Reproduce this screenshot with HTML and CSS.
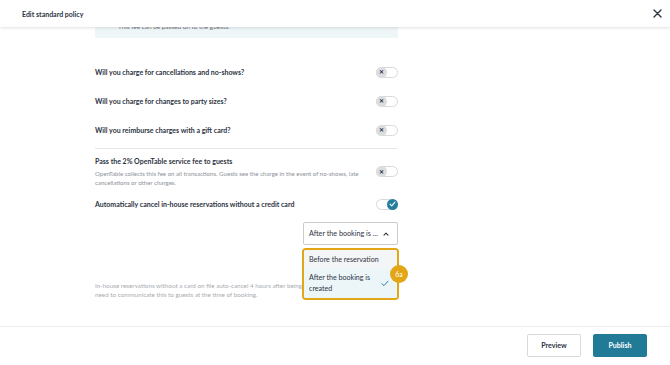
FILE: index.html
```html
<!DOCTYPE html>
<html lang="en">
<head>
    <meta charset="UTF-8">
    <title>Edit standard policy</title>
    <link rel="stylesheet" href="styles.css">
</head>
<body>
    <!-- Header -->
    <div class="header">
        <span class="header-title">Edit standard policy</span>
        <svg class="close" width="9" height="9" viewBox="0 0 9 9">
            <path d="M1 1 L8 8 M8 1 L1 8" stroke="#2d333f" stroke-width="1.4" stroke-linecap="round"/>
        </svg>
    </div>

    <!-- Scrolled policy content -->
    <div class="main">
        <div class="column">
            <div class="fee-note">This fee can be passed on to the guests.</div>

            <div class="row row-first">
                <span class="question">Will you charge for cancellations and no-shows?</span>
                <span class="toggle"><span class="knob">&#x2715;</span></span>
            </div>
            <div class="row">
                <span class="question">Will you charge for changes to party sizes?</span>
                <span class="toggle"><span class="knob">&#x2715;</span></span>
            </div>
            <div class="row">
                <span class="question">Will you reimburse charges with a gift card?</span>
                <span class="toggle"><span class="knob">&#x2715;</span></span>
            </div>

            <div class="divider"></div>

            <div class="row row-desc">
                <div>
                    <div class="question">Pass the 2% OpenTable service fee to guests</div>
                    <div class="desc">OpenTable collects this fee on all transactions. Guests see the charge in the event of no-shows, late cancellations or other charges.</div>
                </div>
                <span class="toggle"><span class="knob">&#x2715;</span></span>
            </div>

            <div class="row row-auto">
                <span class="question">Automatically cancel in-house reservations without a credit card</span>
                <span class="toggle on">
                    <span class="knob">
                        <svg width="7" height="6" viewBox="0 0 7 6"><path d="M1 3.2 L2.7 4.8 L6 1.2" fill="none" stroke="#fff" stroke-width="1.1" stroke-linecap="round" stroke-linejoin="round"/></svg>
                    </span>
                </span>
            </div>

            <div class="select-wrap">
                <div class="select">
                    <span>After the booking is ...</span>
                    <svg width="6" height="4" viewBox="0 0 6 4"><path d="M1 3.2 L3 1.2 L5 3.2" fill="none" stroke="#2d333f" stroke-width="1.1" stroke-linecap="round" stroke-linejoin="round"/></svg>
                </div>
                <div class="menu">
                    <div class="menu-item">Before the reservation</div>
                    <div class="menu-item selected">
                        <span>After the booking is<br>created</span>
                        <svg width="8" height="7" viewBox="0 0 8 7"><path d="M1 3.8 L3 5.6 L7 1.2" fill="none" stroke="#247f9e" stroke-width="1" stroke-linecap="round" stroke-linejoin="round"/></svg>
                    </div>
                    <span class="badge">6a</span>
                </div>
            </div>

            <div class="auto-note">In-house reservations without a card on file auto-cancel 4 hours after being created. You'll<br>need to communicate this to guests at the time of booking.</div>
        </div>
    </div>

    <!-- Footer -->
    <div class="footer">
        <button class="btn btn-secondary">Preview</button>
        <button class="btn btn-primary">Publish</button>
    </div>
</body>
</html>
```

FILE: styles.css
```css
/* General Styles */

body {
    margin: 0;
    width: 670px;
    height: 365px;
    overflow: hidden;
    background: #fff;
    font-family: "Lato", "Open Sans", sans-serif;
    color: #2d333f;
}

.header {
    position: relative;
    z-index: 2;
    height: 27px;
    display: flex;
    align-items: center;
    justify-content: space-between;
    padding: 0 8px 0 22px;
    background: #fff;
    box-shadow: 0 1px 3px rgba(0, 0, 0, 0.12);
}

.header-title {
    font-size: 7px;
    font-weight: 700;
}

.main {
    height: 299px;
    overflow: hidden;
}

.column {
    margin-left: 95px;
    width: 303px;
}

.fee-note {
    margin-top: -5px;
    padding: 0 23px 6px;
    line-height: 10px;
    font-size: 6.4px;
    color: #6f737b;
    background: #eef6f8;
}

/* Question rows */

.row {
    display: flex;
    align-items: center;
    justify-content: space-between;
    min-height: 20px;
    margin-top: 9px;
}

.row-first {
    margin-top: 24px;
}

.row-desc {
    margin-top: 7px;
}

.row-auto {
    margin-top: 7px;
}

.question {
    font-size: 7px;
    font-weight: 700;
    line-height: 10px;
}

.desc {
    margin-top: 3px;
    font-size: 6.1px;
    line-height: 9px;
    color: #8d9299;
    padding-right: 14px;
}

.divider {
    height: 1px;
    background: #e6e7e9;
    margin-top: 8px;
}

.toggle {
    flex: none;
    position: relative;
    width: 20px;
    height: 9px;
    border: 1px solid #d8d9db;
    border-radius: 6px;
    background: #fff;
}

.knob {
    position: absolute;
    left: -1px;
    top: -1px;
    width: 11px;
    height: 11px;
    border-radius: 50%;
    background: #dcdddf;
    color: #2d333f;
    font-size: 5.5px;
    font-weight: 700;
    display: flex;
    align-items: center;
    justify-content: center;
}

.toggle.on .knob {
    left: auto;
    right: -1px;
    background: #247f9e;
}

/* Select and menu */

.select-wrap {
    position: relative;
    width: 95px;
    margin: 8px 0 0 auto;
}

.select {
    height: 23px;
    box-sizing: border-box;
    border: 1px solid #c9cbce;
    border-radius: 2px;
    display: flex;
    align-items: center;
    justify-content: space-between;
    padding: 0 8px 0 5px;
    font-size: 7.2px;
}

.menu {
    position: absolute;
    left: -1px;
    top: 26px;
    width: 97px;
    box-sizing: border-box;
    border: 2px solid #e2a617;
    border-radius: 4px;
    background: #fff;
    z-index: 3;
}

.menu-item {
    font-size: 7.1px;
    line-height: 11px;
    padding: 4px 5px 3px;
    background: #f4f5f6;
    border-radius: 2px 2px 0 0;
}

.menu-item.selected {
    display: flex;
    align-items: center;
    justify-content: space-between;
    padding: 4px 8px 4px 5px;
    background: #ecf6f9;
    border-radius: 0 0 2px 2px;
}

.badge {
    position: absolute;
    right: -11px;
    top: 15px;
    width: 18px;
    height: 18px;
    border-radius: 50%;
    background: #e2a617;
    color: #fff;
    font-size: 6.8px;
    display: flex;
    align-items: center;
    justify-content: center;
}

.auto-note {
    margin-top: 36px;
    font-size: 6.3px;
    line-height: 9px;
    color: #a9acb1;
    white-space: nowrap;
}

/* Footer */

.footer {
    height: 38px;
    box-sizing: border-box;
    border-top: 1px solid #ededee;
    display: flex;
    justify-content: flex-end;
    align-items: center;
    gap: 12px;
    padding: 0 23px 0 0;
    background: #fff;
}

.btn {
    height: 23px;
    width: 54px;
    border-radius: 2px;
    font-family: "Lato", "Open Sans", sans-serif;
    font-size: 7.1px;
    font-weight: 700;
    padding: 0;
}

.btn-secondary {
    background: #fff;
    border: 1px solid #d8d9db;
    color: #2d333f;
}

.btn-primary {
    background: #217b97;
    border: 1px solid #217b97;
    color: #fff;
}
```
